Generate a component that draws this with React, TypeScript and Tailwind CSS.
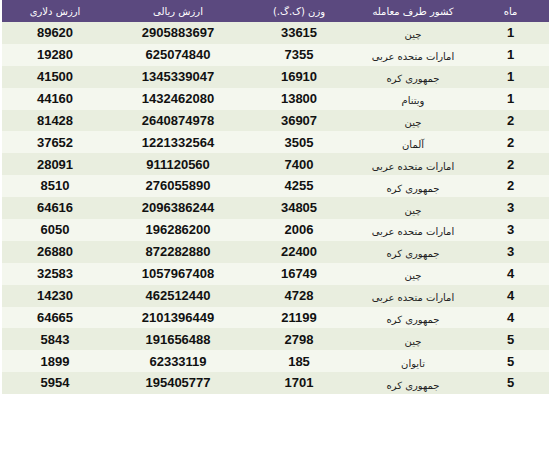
const rows: [string, string, string, string, string][] = [
  ['1', 'چین', '33615', '2905883697', '89620'],
  ['1', 'امارات متحده عربی', '7355', '625074840', '19280'],
  ['1', 'جمهوری کره', '16910', '1345339047', '41500'],
  ['1', 'ویتنام', '13800', '1432462080', '44160'],
  ['2', 'چین', '36907', '2640874978', '81428'],
  ['2', 'آلمان', '3505', '1221332564', '37652'],
  ['2', 'امارات متحده عربی', '7400', '911120560', '28091'],
  ['2', 'جمهوری کره', '4255', '276055890', '8510'],
  ['3', 'چین', '34805', '2096386244', '64616'],
  ['3', 'امارات متحده عربی', '2006', '196286200', '6050'],
  ['3', 'جمهوری کره', '22400', '872282880', '26880'],
  ['4', 'چین', '16749', '1057967408', '32583'],
  ['4', 'امارات متحده عربی', '4728', '462512440', '14230'],
  ['4', 'جمهوری کره', '21199', '2101396449', '64665'],
  ['5', 'چین', '2798', '191656488', '5843'],
  ['5', 'تایوان', '185', '62333119', '1899'],
  ['5', 'جمهوری کره', '1701', '195405777', '5954'],
];

const fa = "font-['DejaVu_Sans',sans-serif]";
const num = "font-['Liberation_Sans',Arial,sans-serif] font-bold text-[13px] text-[#111]";

export default function App() {
  return (
    <div className="w-[554px] h-[468px] bg-white pl-[2px]">
      <div dir="rtl" className="w-[547px]">
        <div className={`flex h-[22px] bg-[#5b497f] text-white text-[10px] ${fa}`}>
          <div className="w-[73px] flex items-center justify-center pr-[4px]">ماه</div>
          <div className="w-[126px] flex items-center justify-center">کشور طرف معامله</div>
          <div className="w-[102px] flex items-center justify-center">وزن (ک.گ.)</div>
          <div className="w-[140px] flex items-center justify-center">ارزش ریالی</div>
          <div className="w-[106px] flex items-center justify-center">ارزش دلاری</div>
        </div>
        {rows.map((r, i) => (
          <div key={i} className={`flex h-[21.9px] ${i % 2 === 0 ? 'bg-[#e9eedf]' : 'bg-[#f4f7ee]'}`}>
            <div className={`w-[73px] flex items-center justify-center pr-[4px] ${num}`}>{r[0]}</div>
            <div className={`w-[126px] flex items-center justify-center pt-[4px] text-[10px] text-[#222] ${fa}`}>{r[1]}</div>
            <div className={`w-[102px] flex items-center justify-center ${num}`}>{r[2]}</div>
            <div className={`w-[140px] flex items-center justify-center ${num}`}>{r[3]}</div>
            <div className={`w-[106px] flex items-center justify-center ${num}`}>{r[4]}</div>
          </div>
        ))}
      </div>
    </div>
  );
}
